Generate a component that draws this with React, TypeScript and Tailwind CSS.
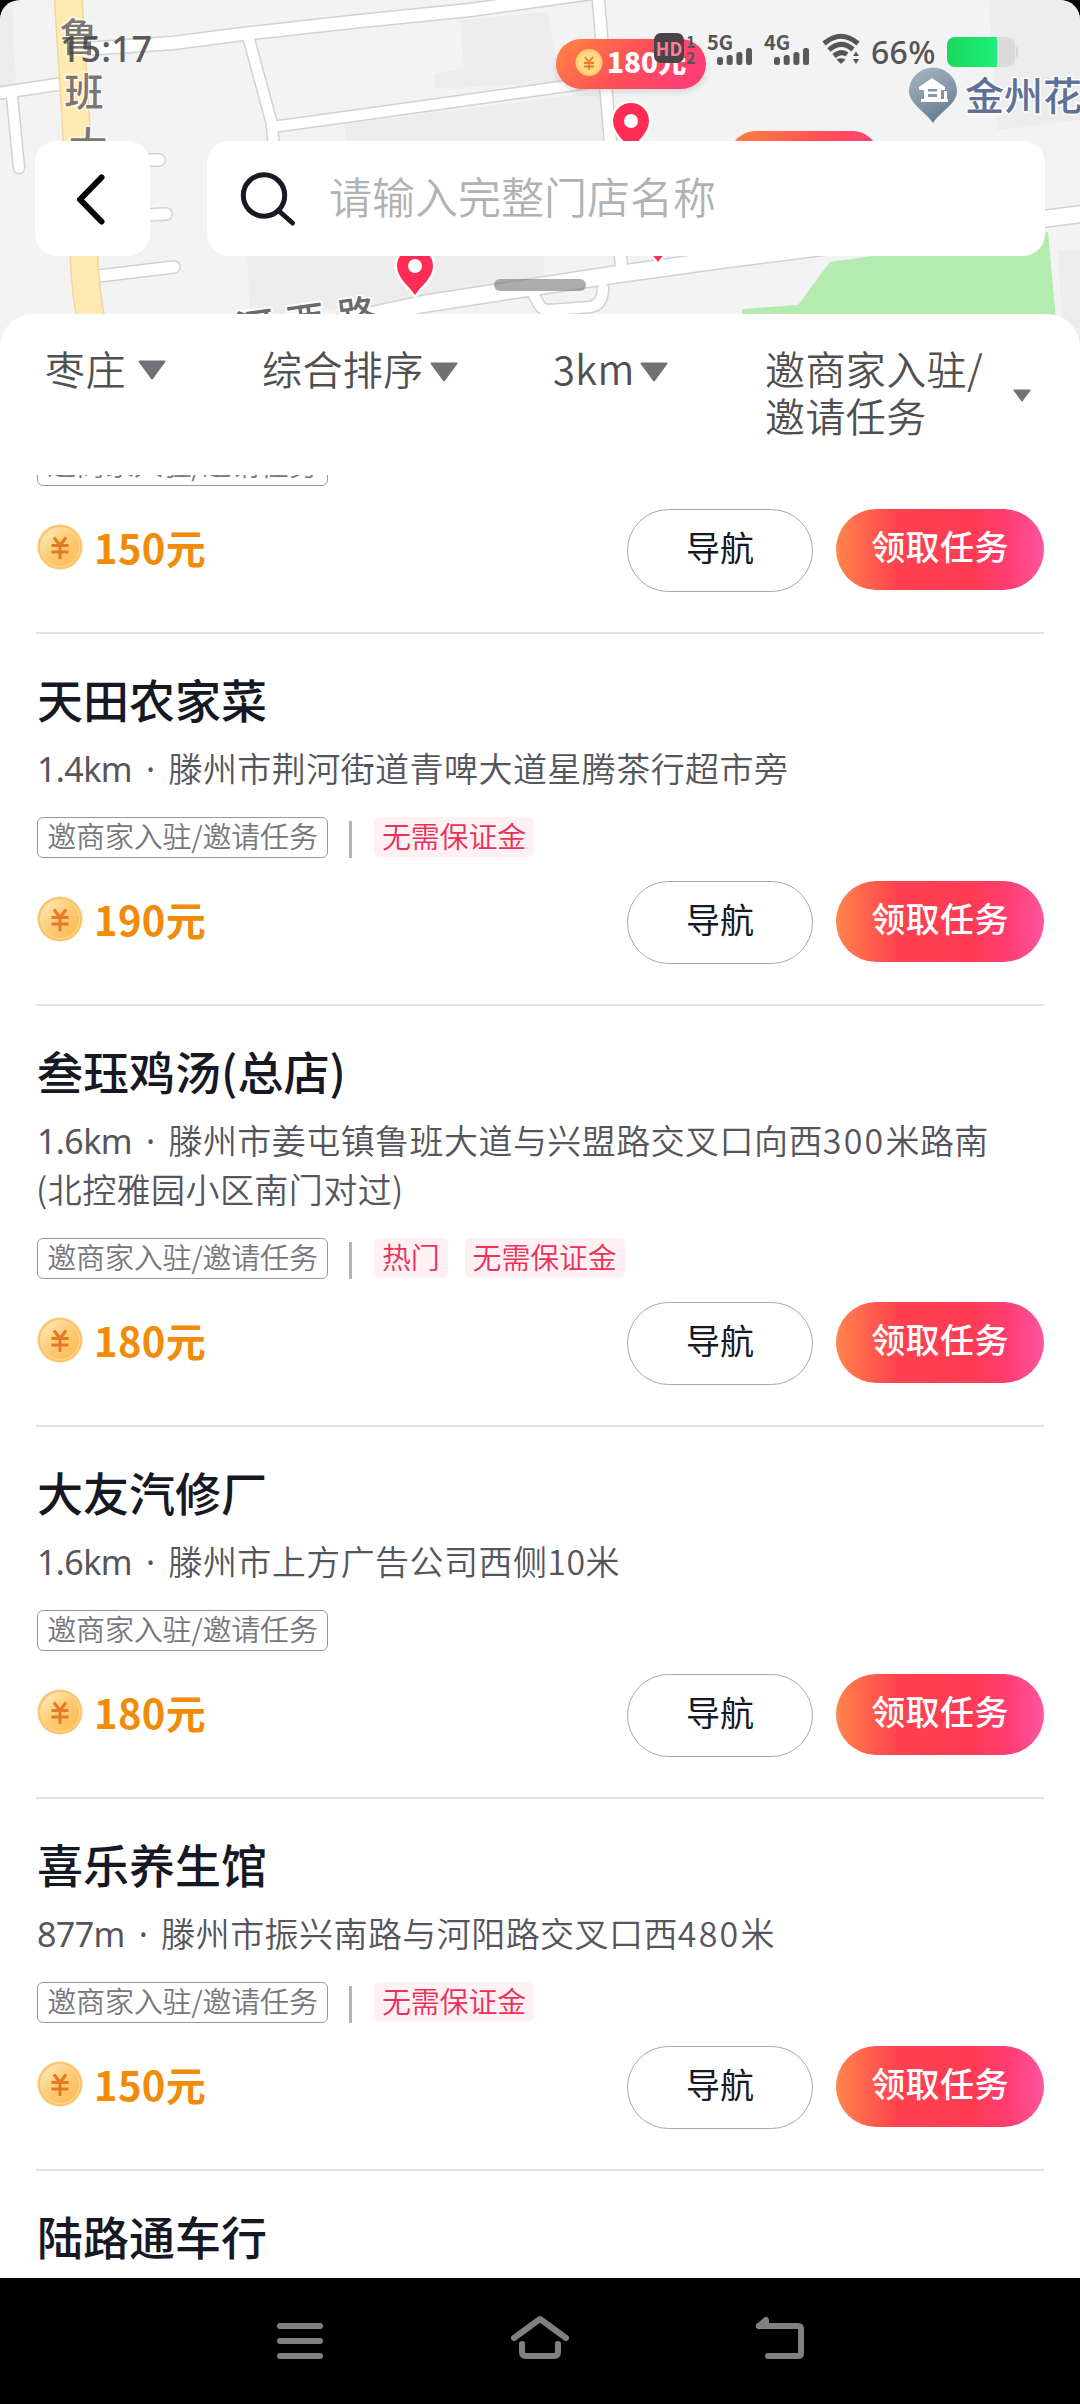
import { Fragment } from "react"

type Task = {
  name?: string
  distance?: string
  address?: string[]
  tags: string[]
  price: number
}

const tasks: Task[] = [
  { tags: [], price: 150 },
  {
    name: "天田农家菜",
    distance: "1.4km",
    address: ["滕州市荆河街道青啤大道星腾茶行超市旁"],
    tags: ["无需保证金"],
    price: 190,
  },
  {
    name: "叁珏鸡汤(总店)",
    distance: "1.6km",
    address: ["滕州市姜屯镇鲁班大道与兴盟路交叉口向西300米路南", "(北控雅园小区南门对过)"],
    tags: ["热门", "无需保证金"],
    price: 180,
  },
  {
    name: "大友汽修厂",
    distance: "1.6km",
    address: ["滕州市上方广告公司西侧10米"],
    tags: [],
    price: 180,
  },
  {
    name: "喜乐养生馆",
    distance: "877m",
    address: ["滕州市振兴南路与河阳路交叉口西480米"],
    tags: ["无需保证金"],
    price: 150,
  },
]

const roads = [
  { d: "M0 93 L60 84", w: 11 },
  { d: "M12 96 L19 168", w: 10 },
  { d: "M84 49 L173 43 L243 34 L360 21 L470 10 L592 -7", w: 12 },
  { d: "M248 36 L272 124 L274 150", w: 10 },
  { d: "M272 127 L360 115 L560 87 L606 80", w: 10 },
  { d: "M598 -5 L606 90 L612 160 L622 272", w: 11 },
  { d: "M130 160 L159 160", w: 11 },
  { d: "M130 216 L166 214", w: 11 },
  { d: "M90 277 L174 267", w: 11 },
  { d: "M532 292 L540 306 Q543 310 550 310 L590 307 Q603 305 603 288", w: 10 },
  { d: "M340 322 L423 304 L612 275 L720 260 L1090 213", w: 16 },
]

function MapPin({ x, y }: { x: number; y: number }) {
  return (
    <g transform={`translate(${x} ${y})`}>
      <path
        d="M0 29 C-6 20 -18 12 -18 0 A18 18 0 0 1 18 0 C18 12 6 20 0 29 Z"
        fill="#ff2c55"
        stroke="#fff"
        strokeWidth="5"
        paintOrder="stroke"
        strokeLinejoin="round"
      />
      <circle r="7" fill="#fff" />
    </g>
  )
}

function MapView() {
  return (
    <svg
      className="absolute top-0 left-0"
      width="1080"
      height="360"
      viewBox="0 0 1080 360"
      fontFamily="'Noto Sans CJK SC', sans-serif"
    >
      <defs>
        <linearGradient id="bubble" x1="0" y1="0" x2="1" y2="0.3">
          <stop offset="0" stopColor="#ff8640" />
          <stop offset="0.6" stopColor="#ff4e58" />
          <stop offset="1" stopColor="#ff3f74" />
        </linearGradient>
        <linearGradient id="place" x1="0" y1="0" x2="0.4" y2="1">
          <stop offset="0" stopColor="#aab7c4" />
          <stop offset="1" stopColor="#6b8095" />
        </linearGradient>
      </defs>
      <rect width="1080" height="360" fill="#f3f3f3" />
      <g fill="#ededed">
        <path d="M0 0 L12 0 L16 86 L0 88 Z" />
        <path d="M460 20 L548 12 L560 82 L435 89 L435 74 L464 68 Z" />
        <path d="M345 124 L600 92 L606 145 L345 145 Z" />
        <path d="M247 250 L543 250 L545 280 L400 304 L250 316 Z" />
        <path d="M989 0 L1080 0 L1080 120 L997 130 Z" />
        <path d="M1058 250 L1080 250 L1080 360 L1064 360 Z" />
      </g>
      <g fill="none" stroke="#d2d2d2" strokeLinecap="round" strokeLinejoin="round">
        {roads.map((r) => (
          <path key={r.d} d={r.d} strokeWidth={r.w + 3} />
        ))}
      </g>
      <g fill="none" stroke="#fff" strokeLinecap="round" strokeLinejoin="round">
        {roads.map((r) => (
          <path key={r.d} d={r.d} strokeWidth={r.w} />
        ))}
      </g>
      <g fill="none">
        <path d="M68 -5 L77 140 L84 256 Q85 290 92 325" stroke="#f3d69c" strokeWidth="29" />
        <path d="M68 -5 L77 140 L84 256 Q85 290 92 325" stroke="#ffebb2" strokeWidth="26" />
      </g>
      <path d="M742 320 L742 309 L798 305 L830 262 L880 255 L1048 232 L1056 320 Z" fill="#b4ebae" />

      <g fontSize="39" fontWeight="500" fill="#7b7671" stroke="#fff" strokeWidth="3" strokeOpacity="0.7" paintOrder="stroke" textAnchor="middle">
        <text x="79" y="51">鲁</text>
        <text x="84" y="106">班</text>
        <text x="88" y="160">大</text>
      </g>
      <g fontSize="38" fontWeight="500" fill="#6a6a6a" stroke="#fff" strokeWidth="4" paintOrder="stroke">
        <text transform="translate(238 343) rotate(-8)">河</text>
        <text transform="translate(289 337) rotate(-8)">西</text>
        <text transform="translate(340 331) rotate(-8)">路</text>
      </g>

      <path d="M933 123 C926 112 909 104 909 91 A24 23.5 0 0 1 957 91 C957 104 940 112 933 123 Z" fill="url(#place)" />
      <path d="M919 87 L932 78 L945 87 V90 H941 V99 H944 V91 H947 V99 H948 V102 H921 V99 H924 V90 H919 Z" fill="#fff" />
      <path d="M928 89 H937 V91.500 H928 Z M928 94 H937 V97 H928 Z" fill="#8496a8" />
      <text x="965" y="110" fontSize="39" fontWeight="500" fill="#5f7196" stroke="#fff" strokeWidth="3" paintOrder="stroke">
        金州花
      </text>

      <MapPin x={631} y={121} />
      <MapPin x={415} y={266} />
      <MapPin x={658} y={233} />
      <rect x="730" y="131" width="148" height="50" rx="25" fill="url(#bubble)" />
      <g className="drop-shadow-md">
        <rect x="556" y="39" width="150" height="50" rx="25" fill="url(#bubble)" />
      </g>
      <circle cx="589" cy="62.500" r="13.500" fill="#ffcf6b" />
      <circle cx="589" cy="62.500" r="11" fill="#ffd98a" />
      <path d="M585 57 L589 62 L593 57 M584 63 H594 M584 66.500 H594 M589 62 V70" stroke="#ee7d22" strokeWidth="1.800" fill="none" />
      <text x="607" y="73" fontSize="28" fontWeight="900" fill="#fff">
        180元
      </text>
    </svg>
  )
}

function SignalBars() {
  return (
    <svg width="36" height="17" viewBox="0 0 36 17" fill="#595959">
      <rect x="0" y="9" width="6" height="8" rx="2.500" />
      <rect x="9.700" y="7" width="6" height="10" rx="2.500" />
      <rect x="19.400" y="4" width="6" height="13" rx="2.500" />
      <rect x="29" y="0" width="6" height="17" rx="2.500" />
    </svg>
  )
}

function Signal({ label }: { label: string }) {
  return (
    <div className="flex w-[46px] flex-col items-end">
      <span className="-mb-[2px] w-full text-[20px] leading-[17px] font-bold">{label}</span>
      <SignalBars />
    </div>
  )
}

function StatusBar() {
  return (
    <div className="relative flex h-[96px] items-start pr-[62px] pl-[60px] text-[#555]">
      <span className="mt-[25px] font-['Noto_Sans','Noto_Sans_CJK_SC',sans-serif] text-[36px] leading-[48px] font-medium text-[#454545]/90">
        15:17
      </span>
      <div className="mt-[33px] ml-auto flex">
        <div className="flex h-[30px] w-[30px] items-center justify-center rounded-[7px] bg-[#4a4446]">
          <div className="text-[18px] leading-[20px] font-bold text-[#ff8095]">HD</div>
        </div>
        <div className="ml-[2px] flex w-[11px] flex-col text-[16px] leading-[16px] font-bold">
          <span>1</span>
          <span>2</span>
        </div>
        <div className="ml-[10px]">
          <Signal label="5G" />
        </div>
        <div className="ml-[11px]">
          <Signal label="4G" />
        </div>
        <svg className="ml-[12px]" width="38" height="32" viewBox="0 0 38 32" fill="none" stroke="#555" strokeWidth="5">
          <path d="M2 10.500 Q19 -4 36 10.500" />
          <path d="M7 17 Q19 6 31 16.500" />
          <path d="M12 23 Q19 17 25 21.500" />
          <path d="M14.500 26.500 Q19 24 23.500 26.500 L19 31 Z" fill="#555" stroke="none" />
          <path d="M31 23 L34 18.500 L37 23 Z M31 26 L34 31 L37 26 Z" fill="#555" stroke="none" />
        </svg>
        <span className="ml-[11px] w-[68px] font-['Noto_Sans','Noto_Sans_CJK_SC',sans-serif] text-[32px] leading-[37px] font-medium tracking-[0.3px] whitespace-nowrap">
          66%
        </span>
        <div className="ml-[8px] flex items-center">
          <div className="flex h-[30px] w-[68px] overflow-hidden rounded-[8px] bg-[#dadada]">
            <div className="w-[50px] bg-linear-to-r from-[#1bd85f] to-[#1eef78]" />
          </div>
          <div className="ml-[1px] h-[10px] w-[2px] rounded-full bg-[#d4d4d4]" />
        </div>
      </div>
    </div>
  )
}

function SearchRow() {
  return (
    <div className="relative mt-[45px] flex h-[115px] pr-[35px] pl-[35px]">
      <button className="flex w-[115px] items-center justify-center rounded-[22px] bg-white">
        <svg width="60" height="60" viewBox="0 0 60 60" fill="none" stroke="#000" strokeWidth="6" strokeLinecap="round" strokeLinejoin="round">
          <path d="M38.500 8.500 L17 30.500 L38.500 52.500" />
        </svg>
      </button>
      <div className="ml-[57px] flex flex-1 items-center rounded-[22px] bg-white pl-[33px]">
        <svg width="58" height="58" viewBox="0 0 58 58" fill="none" stroke="#161823" strokeWidth="5" strokeLinecap="round">
          <circle cx="24" cy="25.500" r="20.700" />
          <path d="M39 41 L52.500 53" />
        </svg>
        <span className="ml-[31px] pb-[7px] text-[43px] leading-[56px] font-[350] text-[#b2b2b2]">请输入完整门店名称</span>
      </div>
    </div>
  )
}

function Caret({ small = false }: { small?: boolean }) {
  return (
    <svg width={small ? 18 : 28} height={small ? 13 : 20} viewBox="0 0 28 20" className="shrink-0">
      <path d="M1.500 1.500 H26.500 L14 18.500 Z" fill="#717178" stroke="#717178" strokeWidth="2" strokeLinejoin="round" />
    </svg>
  )
}

function FilterBar() {
  return (
    <div className="flex h-[161px] items-start pt-[31px] pl-[45px] text-[40px] leading-[47px] font-[350] tracking-[0.4px] text-[#505050]">
      <div className="flex w-[217px] items-center gap-[12px]">
        枣庄
        <div className="pt-[3px]">
          <Caret />
        </div>
      </div>
      <div className="flex w-[291px] items-center gap-[6px]">
        综合排序
        <div className="pt-[7px]">
          <Caret />
        </div>
      </div>
      <div className="flex w-[212px] items-center gap-[5px]">
        3km
        <div className="pt-[7px]">
          <Caret />
        </div>
      </div>
      <div className="flex items-center">
        <div className="w-[248px]">
          邀商家入驻/
          <br />
          邀请任务
        </div>
        <div className="pt-[7px]">
          <Caret small />
        </div>
      </div>
    </div>
  )
}

function Coin() {
  return (
    <svg width="46" height="46" viewBox="0 0 46 46" fill="none">
      <defs>
        <linearGradient id="coin" x1="0" y1="0" x2="1" y2="1">
          <stop offset="0" stopColor="#fff0c4" />
          <stop offset="0.45" stopColor="#fdcd79" />
          <stop offset="1" stopColor="#fdb94e" />
        </linearGradient>
      </defs>
      <circle cx="23" cy="23" r="22.500" fill="#fbc66f" />
      <circle cx="23" cy="23" r="19.500" fill="url(#coin)" stroke="#fddb9a" />
      <path d="M17 13.500 L23 21.500 L29 13.500 M14.500 21.500 H31.500 M14.500 28 H31.500 M23 21.500 V35" stroke="#e27a26" strokeWidth="3" />
    </svg>
  )
}

// three-digit numbers are set a little wider than the text around them
function AddressLine({ text }: { text: string }) {
  return text.split(/(\d{3})/).map((part, i) => (
    <span key={i} className={/^\d{3}$/.test(part) ? "tracking-[2.2px]" : ""}>
      {part}
    </span>
  ))
}

function TaskCard({ task }: { task: Task }) {
  return (
    <li className="border-b-2 border-[#e3e3e4] pb-[40px]">
      {task.name && (
        <div className="pt-[36px] pb-[23px]">
          <h2 className="pl-[1px] text-[46px] leading-[56px] font-medium text-[#161823]">{task.name}</h2>
          <p className="mt-[17px] mb-[2px] text-[34px] leading-[49px] font-[350] tracking-[0.44px] text-[#55555b]">
            <span className="pl-[1px] font-['Noto_Sans','Noto_Sans_CJK_SC',sans-serif] leading-none font-normal tracking-[-0.6px]">
              {task.distance}
              <span className="mx-[14px]">·</span>
            </span>
            {task.address?.map((line, i) => (
              <Fragment key={line}>
                {i > 0 && <br />}
                <AddressLine text={line} />
              </Fragment>
            ))}
          </p>
        </div>
      )}
      <div className="flex h-[41px] text-[29px] leading-[41px] font-[350]">
        <div className="ml-[1px] flex w-[291px] items-center justify-center rounded-[6px] border border-[#999] pb-[5px] tracking-[-0.2px] text-[#77777b]">
          邀商家入驻/邀请任务
        </div>
        {task.tags.length > 0 && <div className="mt-[4px] mr-[22px] ml-[21px] w-[3px] bg-[#b4b4b4]" />}
        {task.tags.map((tag) => (
          <div
            key={tag}
            className="mr-[17px] flex h-[40px] items-center rounded-[6px] bg-[#fff0f3] px-[8px] pb-[4px] tracking-[-0.2px] text-[#ea3159]"
          >
            {tag}
          </div>
        ))}
      </div>
      <div className="mt-[23px] flex h-[83px] items-start">
        <div className="ml-[1px] pt-[15px]">
          <Coin />
        </div>
        <span className="ml-[11px] pt-[14px] text-[40px] leading-[48px] font-bold tracking-[0.3px] text-[#f08c0a]">
          {task.price}元
        </span>
        <button className="ml-auto h-[83px] w-[186px] rounded-full border border-[#a8a8a8] pb-[9px] text-[34px] text-[#161823]">
          导航
        </button>
        <button className="ml-[23px] h-[81px] w-[208px] rounded-full bg-[linear-gradient(90deg,#ff844c_0%,#ff414f_30%,#ff3b54_65%,#ff3d70_82%,#ff559f_100%)] pb-[9px] text-[34px] font-medium tracking-[0.4px] text-white">
          领取任务
        </button>
      </div>
    </li>
  )
}

function NavBar() {
  return (
    <nav className="flex h-[126px] items-center justify-between bg-black px-[270px] pb-[6px]">
      <svg width="60" height="60" viewBox="0 0 60 60" stroke="#808080" strokeWidth="6" strokeLinecap="round">
        <path d="M10 18 H50 M10 33 H50 M10 48 H50" />
      </svg>
      <svg width="60" height="60" viewBox="0 0 60 60" fill="none" stroke="#808080" strokeWidth="6" strokeLinecap="round" strokeLinejoin="round">
        <path d="M4 30 L30 11 L56 30" />
        <path d="M12 36 V44 Q12 48 16 48 H44 Q48 48 48 44 V36" />
      </svg>
      <svg width="60" height="60" viewBox="0 0 60 60" fill="none" stroke="#808080" strokeWidth="6" strokeLinecap="round" strokeLinejoin="round">
        <path d="M9 18 H48 Q51 18 51 21 V45 Q51 48 48 48 H18" />
        <path d="M9 18 L16 12 V17" />
      </svg>
    </nav>
  )
}

export default function App() {
  return (
    <div className="relative flex h-[2404px] w-[1080px] flex-col overflow-hidden bg-black font-['Noto_Sans_CJK_SC',sans-serif]">
      <div className="relative flex h-[314px] shrink-0 flex-col">
        <div className="absolute top-0 left-0 h-[360px] w-[1080px] overflow-hidden rounded-t-[20px]">
          <MapView />
        </div>
        <StatusBar />
        <SearchRow />
        <div className="relative mx-auto mt-[23px] h-[12px] w-[92px] rounded-full bg-[#808084]/65" />
      </div>

      <main className="relative flex min-h-0 flex-1 flex-col rounded-t-[33px] bg-white">
        <FilterBar />
        <div className="min-h-0 flex-1 overflow-hidden px-[36px]">
          <ul className="-mt-[30px]">
            {tasks.map((task, i) => (
              <TaskCard key={i} task={task} />
            ))}
            <li className="pt-[36px] pl-[1px] text-[46px] leading-[56px] font-medium text-[#161823]">陆路通车行</li>
          </ul>
        </div>
      </main>

      <NavBar />
    </div>
  )
}
